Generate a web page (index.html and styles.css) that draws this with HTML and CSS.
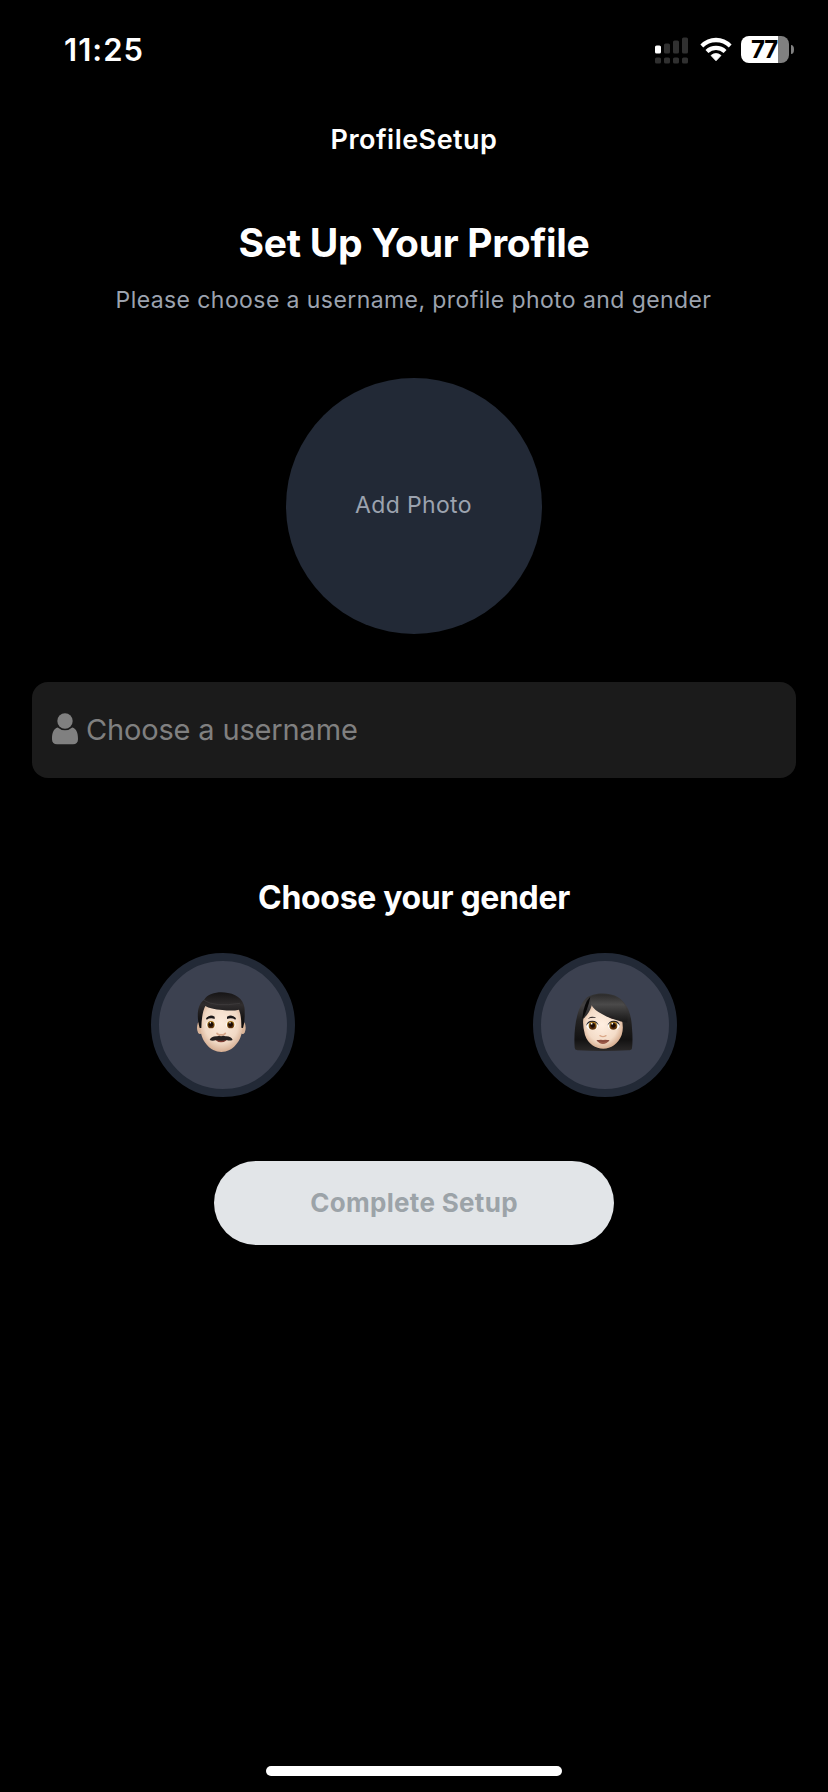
FILE: index.html
```html
<!DOCTYPE html>
<html lang="en">
<head>
<meta charset="utf-8">
<title>ProfileSetup</title>
<link rel="stylesheet" href="styles.css">
</head>
<body>
<div class="screen">
  <header class="status-bar">
    <span class="time">11:25</span>
    <div class="indicators">
      <svg class="signal" viewBox="0 0 34 27" aria-hidden="true">
        <g fill="#303030">
          <rect x="9" y="6.5" width="6" height="10" rx="1.6"/>
          <rect x="18" y="3.5" width="6" height="13" rx="1.6"/>
          <rect x="27" y="0.5" width="6" height="16" rx="1.6"/>
          <rect x="0" y="20.5" width="6" height="6" rx="1.6"/>
          <rect x="9" y="20.5" width="6" height="6" rx="1.6"/>
          <rect x="18" y="20.5" width="6" height="6" rx="1.6"/>
          <rect x="27" y="20.5" width="6" height="6" rx="1.6"/>
        </g>
        <rect x="0" y="8.5" width="6" height="8" rx="1.6" fill="#fff"/>
      </svg>
      <svg class="wifi" viewBox="0 0 32 25" aria-hidden="true">
        <path d="M0.4 7.6Q7 0.8 16 0.8T31.6 7.6L28.8 10.5Q23.6 5.3 16 5.3T3.2 10.5Z" fill="#fff"/>
        <path d="M5.5 12.9Q9.8 8.7 16 8.7T26.5 12.9L23.6 15.9Q20.3 12.9 16 12.9T8.4 15.9Z" fill="#fff"/>
        <path d="M11 18.5Q13.2 16.5 16 16.5T21 18.5L16 23.8Z" fill="#fff" stroke="#fff" stroke-width=".8" stroke-linejoin="round"/>
      </svg>
      <div class="battery"><div class="battery-body"><span>77</span></div><i class="battery-cap"></i></div>
    </div>
  </header>
  <nav class="nav">ProfileSetup</nav>
  <main class="content">
    <h1 class="title">Set Up Your Profile</h1>
    <p class="subtitle">Please choose a username, profile photo and gender</p>
    <div class="photo">Add Photo</div>
    <div class="field">
      <svg class="person" viewBox="0 0 26 32" aria-hidden="true">
        <circle cx="13" cy="8" r="7.7"/>
        <path d="M5.7 14.6Q8.6 17.3 13 17.3T20.3 14.6C24.5 15.8 26 20 26 26.2C26 29.6 24 31.3 21 31.3H5C2 31.3 0 29.6 0 26.2C0 20 1.5 15.8 5.7 14.6Z"/>
      </svg>
      <span class="placeholder">Choose a username</span>
    </div>
    <h2 class="subheading">Choose your gender</h2>
    <div class="genders">
      <div class="gender">
        <svg viewBox="57 63 384 384" role="img" aria-label="Man">
          <defs>
            <radialGradient id="skinM" cx=".5" cy=".42" r=".62"><stop offset="0" stop-color="#fcebdc"/><stop offset=".65" stop-color="#f1d9c5"/><stop offset="1" stop-color="#cfa386"/></radialGradient>
            <linearGradient id="hairM" x1="0" y1="0" x2="0" y2="1"><stop offset="0" stop-color="#161415"/><stop offset=".35" stop-color="#302d2e"/><stop offset=".7" stop-color="#171516"/><stop offset="1" stop-color="#0b0a0a"/></linearGradient>
            <radialGradient id="iris" cx=".5" cy=".65" r=".6"><stop offset="0" stop-color="#3a1a08"/><stop offset=".5" stop-color="#5a310d"/><stop offset="1" stop-color="#a87818"/></radialGradient>
          </defs>
          <ellipse cx="180" cy="263" rx="9" ry="19" fill="#d9b499"/>
          <ellipse cx="308" cy="263" rx="9" ry="19" fill="#d9b499"/>
          <path d="M181 215Q184 186 244 186T307 215V262C307 302 278 336 244 336S181 302 181 262Z" fill="url(#skinM)"/>
          <path d="M179 264C170 232 170 195 192 180C205 158 239 154 264 159C298 164 316 187 314 216Q315 247 309 264L304 263Q305 231 297 209Q277 214 247 210Q211 207 196 198Q185 218 184 264Z" fill="url(#hairM)"/>
          <path d="M192 181Q224 202 300 190" fill="none" stroke="#444142" stroke-width="3" opacity=".6"/>
          <path d="M198 235Q209 221 224 230V237Q211 232 200 239ZM288 235Q277 221 261 230V237Q275 232 286 239Z" fill="#1b1718"/>
          <ellipse cx="213" cy="254" rx="15" ry="11" fill="#fffaf4"/><ellipse cx="272" cy="254" rx="15" ry="11" fill="#fffaf4"/>
          <circle cx="213" cy="254" r="11" fill="url(#iris)"/><circle cx="272" cy="254" r="11" fill="url(#iris)"/>
          <circle cx="213" cy="253" r="7" fill="#1a0b05"/><circle cx="272" cy="253" r="7" fill="#1a0b05"/>
          <circle cx="211" cy="248" r="2.3" fill="#fff"/><circle cx="270" cy="248" r="2.3" fill="#fff"/>
          <path d="M231 280Q237 287 243 284Q250 287 256 280" fill="none" stroke="#d6a78a" stroke-width="5" stroke-linecap="round"/>
          <path d="M225 299Q243 315 262 299Z" fill="#803f35"/>
          <path d="M209 300Q214 288 231 289Q239 285 243 289Q249 285 257 289Q273 288 278 300Q268 303 260 300Q244 305 228 300Q218 304 209 300Z" fill="#242020"/>
        </svg>
      </div>
      <div class="gender">
        <svg viewBox="63 63 384 384" role="img" aria-label="Woman">
          <defs>
            <linearGradient id="hairW" x1="0" y1="0" x2="0" y2="1"><stop offset="0" stop-color="#303030"/><stop offset=".2" stop-color="#444243"/><stop offset=".45" stop-color="#242323"/><stop offset=".8" stop-color="#131212"/><stop offset="1" stop-color="#2b2929"/></linearGradient>
            <linearGradient id="fringe" x1="0" y1="0" x2="0" y2="1"><stop offset="0" stop-color="#2c2b2b"/><stop offset=".35" stop-color="#4b4a4a"/><stop offset=".75" stop-color="#2a2929"/><stop offset="1" stop-color="#181717"/></linearGradient>
            <radialGradient id="skinW" cx=".48" cy=".45" r=".6"><stop offset="0" stop-color="#ffefe1"/><stop offset=".65" stop-color="#f4dcc8"/><stop offset="1" stop-color="#cfa080"/></radialGradient>
          </defs>
          <path d="M164 323C160 265 171 201 197 176C219 157 268 156 294 172C323 191 334 222 336 265Q339 300 336 325Q335 331 325 331Q250 335 172 331Q164 330 164 323Z" fill="url(#hairW)"/>
          <path d="M190 236Q208 221 216 194Q240 214 305 236Q312 264 305 285C294 312 273 326 250 326S204 312 195 285Q187 256 190 236Z" fill="url(#skinW)"/>
          <path d="M211 170Q203 211 187 237Q190 190 211 170Z" fill="#0a0909"/>
          <path d="M213 169C234 160 278 162 298 176C321 196 326 222 322 248Q276 240 250 224Q219 209 213 191Z" fill="url(#fringe)"/>
          <path d="M203 237Q214 225 229 234Q215 231 203 237ZM268 233Q274 226 282 232L279 236Z" fill="#272022"/>
          <ellipse cx="217" cy="256" rx="18" ry="14" fill="#fff"/><ellipse cx="281" cy="256" rx="18" ry="14" fill="#fff"/>
          <path d="M198 258Q201 241 218 242Q232 242 236 257Q229 246 217 246Q206 246 198 258ZM300 258Q297 241 280 242Q267 242 262 257Q270 246 281 246Q292 246 300 258Z" fill="#252022"/>
          <circle cx="218" cy="257" r="12" fill="url(#iris)"/><circle cx="280" cy="257" r="12" fill="url(#iris)"/>
          <circle cx="218" cy="256" r="7" fill="#1a0b05"/><circle cx="280" cy="256" r="7" fill="#1a0b05"/>
          <circle cx="215" cy="251" r="2.5" fill="#fff"/><circle cx="277" cy="251" r="2.5" fill="#fff"/>
          <path d="M240 287Q249 293 258 287" fill="none" stroke="#dba98a" stroke-width="4" stroke-linecap="round"/>
          <path d="M229 301Q242 298 249 300Q257 298 269 301Q260 312 249 312T229 301Z" fill="#9b5948"/>
          <path d="M231 302Q249 305 267 302" stroke="#6c342c" stroke-width="1.7" fill="none"/>
        </svg>
      </div>
    </div>
    <div class="submit">Complete Setup</div>
  </main>
  <footer class="home"><div class="home-bar"></div></footer>
</div>
</body>
</html>
```
FILE: styles.css
```css
* { box-sizing: border-box; }
body { margin: 0; background: #000; color: #fff; font-family: Inter, "Liberation Sans", sans-serif; }
h1, h2, p { margin: 0; }
.screen { width: 828px; height: 1792px; display: flex; flex-direction: column; overflow: hidden; background: #000; }
.status-bar { height: 100px; padding: 0 34px 0 64px; display: flex; justify-content: space-between; align-items: center; }
.time { font-size: 31px; font-weight: 600; line-height: 40px; letter-spacing: 1.02px; }
.indicators { display: flex; align-items: center; }
.signal { width: 34px; height: 27px; margin-right: 11px; }
.wifi { width: 32px; height: 25px; margin-right: 9px; margin-top: -2px; }
.battery { display: flex; align-items: center; gap: 2px; margin-top: -1px; }
.battery-body { width: 48px; height: 27px; border-radius: 8px; background: linear-gradient(90deg, #fff 37px, #808080 37px); padding-left: 10px; display: flex; align-items: center; color: #000; font-size: 24px; font-weight: 700; line-height: 27px; letter-spacing: -1.2px; }
.battery-cap { width: 3px; height: 9px; border-radius: 0 3px 3px 0 / 0 4.5px 4.5px 0; background: #808080; }
.nav { height: 78px; line-height: 76px; padding-top: 2px; text-align: center; font-size: 27px; font-weight: 600; letter-spacing: .47px; }
.content { flex: 1; padding: 40px 32px 0; display: flex; flex-direction: column; align-items: center; }
.title { font-size: 39px; font-weight: 700; line-height: 50px; letter-spacing: -.3px; }
.subtitle { margin-top: 13px; font-size: 23px; line-height: 38px; letter-spacing: .42px; padding-right: 1px; color: #9ca3af; }
.photo { width: 256px; height: 256px; margin-top: 59px; border-radius: 50%; background: #222936; color: #9ca3af; display: flex; align-items: center; justify-content: center; font-size: 23px; letter-spacing: .35px; padding: 0 1px 2px 0; }
.field { width: 100%; height: 96px; margin-top: 48px; padding-left: 20px; border-radius: 16px; background: #1b1b1b; display: flex; align-items: center; gap: 8px; }
.person { width: 26px; height: 32px; fill: #808080; margin-top: -2px; }
.placeholder { color: #808080; font-size: 29px; line-height: 40px; letter-spacing: -.16px; }
.subheading { margin-top: 100px; font-size: 32px; font-weight: 700; line-height: 40px; letter-spacing: -.33px; }
.genders { width: 100%; margin-top: 35px; display: flex; justify-content: space-around; }
.gender { width: 144px; height: 144px; border: 8px solid #222936; border-radius: 50%; background: #3c4150; }
.gender svg { display: block; width: 128px; height: 128px; }
.submit { width: 400px; height: 84px; margin-top: 64px; border-radius: 42px; background: #e2e5e8; color: #9ca3a8; display: flex; align-items: center; justify-content: center; font-size: 26px; font-weight: 700; letter-spacing: .31px; padding-bottom: 2px; }
.home { height: 26px; display: flex; justify-content: center; }
.home-bar { width: 296px; height: 10px; border-radius: 5px; background: #fff; }
```
